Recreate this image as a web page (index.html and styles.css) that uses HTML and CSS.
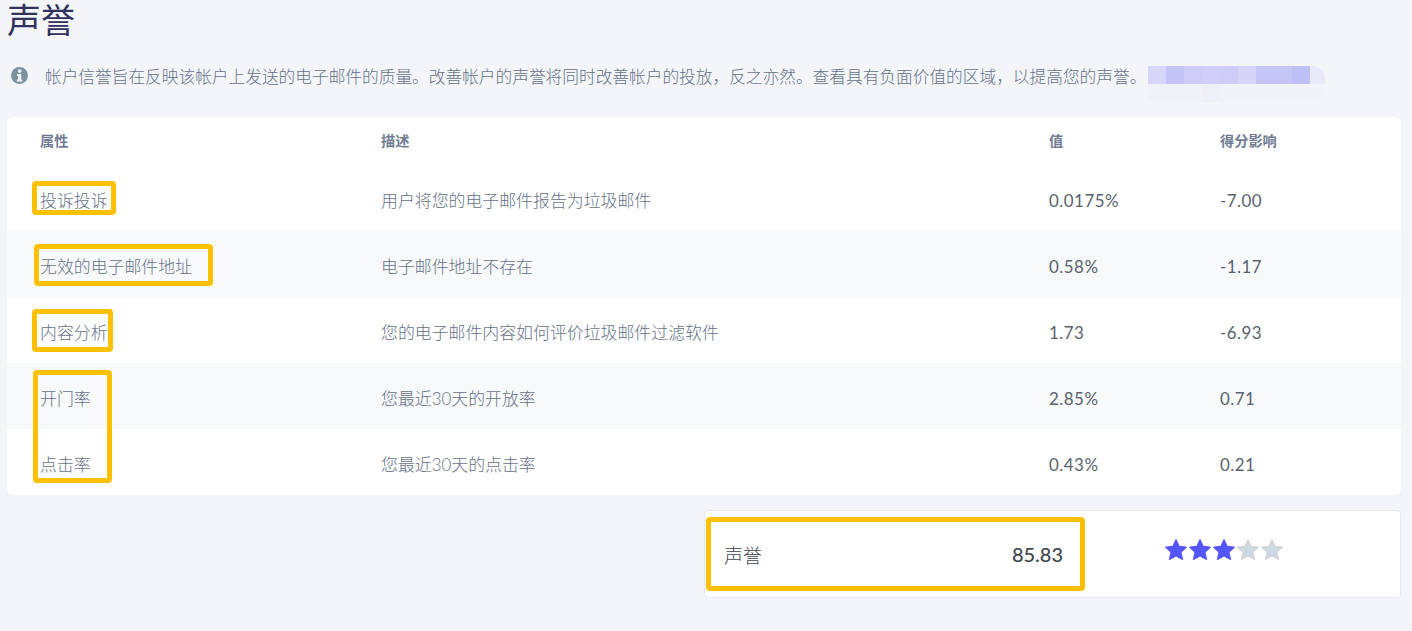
FILE: index.html
```html
<!DOCTYPE html>
<html lang="zh-CN">
<head>
<meta charset="utf-8">
<title>声誉</title>
<link rel="stylesheet" href="styles.css">
</head>
<body>
<main class="page">
  <h1 class="title">声誉</h1>
  <p class="notice">
    <svg class="notice-icon" viewBox="0 0 16 16" aria-hidden="true"><circle cx="8" cy="8" r="8" fill="#7d929f"/><circle cx="8.2" cy="3.9" r="1.7" fill="#f3f5f9"/><path d="M5.6 6.6h4v5.2h1.1v1.9H5.5v-1.9h1.2V8.5H5.6z" fill="#f3f5f9"/></svg>
    <span>帐户信誉旨在反映该帐户上发送的电子邮件的质量。改善帐户的声誉将同时改善帐户的投放，反之亦然。查看具有负面价值的区域，以提高您的声誉。</span>
  </p>
  <table class="table">
    <colgroup><col class="c1"><col class="c2"><col class="c3"><col class="c4"></colgroup>
    <thead>
      <tr><th>属性</th><th>描述</th><th>值</th><th>得分影响</th></tr>
    </thead>
    <tbody>
      <tr><td>投诉投诉</td><td>用户将您的电子邮件报告为垃圾邮件</td><td class="num">0.0175%</td><td class="num">-7.00</td></tr>
      <tr><td>无效的电子邮件地址</td><td>电子邮件地址不存在</td><td class="num">0.58%</td><td class="num">-1.17</td></tr>
      <tr><td>内容分析</td><td>您的电子邮件内容如何评价垃圾邮件过滤软件</td><td class="num">1.73</td><td class="num">-6.93</td></tr>
      <tr><td>开门率</td><td>您最近30天的开放率</td><td class="num">2.85%</td><td class="num">0.71</td></tr>
      <tr><td>点击率</td><td>您最近30天的点击率</td><td class="num">0.43%</td><td class="num">0.21</td></tr>
    </tbody>
  </table>
  <section class="summary">
    <div class="score">
      <span class="score-label">声誉</span>
      <span class="score-value">85.83</span>
    </div>
    <div class="stars">
      <svg class="star on" viewBox="0 0 24 24" aria-hidden="true"><path d="M12 1.4l3.2 6.9 7.4.9-5.5 5.1 1.5 7.4-6.6-3.7-6.6 3.7 1.5-7.4-5.5-5.1 7.4-.9z"/></svg>
      <svg class="star on" viewBox="0 0 24 24" aria-hidden="true"><path d="M12 1.4l3.2 6.9 7.4.9-5.5 5.1 1.5 7.4-6.6-3.7-6.6 3.7 1.5-7.4-5.5-5.1 7.4-.9z"/></svg>
      <svg class="star on" viewBox="0 0 24 24" aria-hidden="true"><path d="M12 1.4l3.2 6.9 7.4.9-5.5 5.1 1.5 7.4-6.6-3.7-6.6 3.7 1.5-7.4-5.5-5.1 7.4-.9z"/></svg>
      <svg class="star" viewBox="0 0 24 24" aria-hidden="true"><path d="M12 1.4l3.2 6.9 7.4.9-5.5 5.1 1.5 7.4-6.6-3.7-6.6 3.7 1.5-7.4-5.5-5.1 7.4-.9z"/></svg>
      <svg class="star" viewBox="0 0 24 24" aria-hidden="true"><path d="M12 1.4l3.2 6.9 7.4.9-5.5 5.1 1.5 7.4-6.6-3.7-6.6 3.7 1.5-7.4-5.5-5.1 7.4-.9z"/></svg>
    </div>
  </section>
</main>
<div class="mosaic"></div>
<div class="mark m1"></div>
<div class="mark m2"></div>
<div class="mark m3"></div>
<div class="mark m4"></div>
<div class="mark m5"></div>
</body>
</html>
```
FILE: styles.css
```css
* { box-sizing: border-box; }
html, body { margin: 0; height: 100%; }
body {
  background: #f3f5f9;
  font-family: Lato, "Noto Sans CJK SC", sans-serif;
  color: #667289;
  overflow: hidden;
  position: relative;
}
.page { padding: 0 11px 0 7px; display: flex; flex-direction: column; }
.title {
  margin: 0;
  height: 59px;
  font-size: 34px;
  line-height: 40px;
  font-weight: 400;
  color: #32325d;
}
.notice {
  margin: 0;
  height: 41px;
  padding: 0 0 8px 4px;
  display: flex;
  align-items: center;
  gap: 17px;
  font-size: 16.7px;
  font-weight: 300;
  white-space: nowrap;
}
.notice-icon { width: 17px; height: 17px; flex: none; }
.table {
  width: 1394px;
  height: 378px;
  margin-top: 17px;
  border-collapse: separate;
  border-spacing: 0;
  table-layout: fixed;
  background: #fff;
  border-radius: 6px;
  overflow: hidden;
}
.c1 { width: 374px; }
.c2 { width: 668px; }
.c3 { width: 171px; }
.c4 { width: 181px; }
th {
  height: 48px;
  padding: 0 0 2px 33px;
  text-align: left;
  font-size: 14.2px;
  font-weight: 700;
  color: #707c93;
}
th + th, td + td { padding-left: 0; }
td {
  height: 66px;
  padding: 2px 0 0 33px;
  font-size: 16.9px;
  font-weight: 300;
}
tbody tr:nth-child(even) td { background: #f8f9fb; }
td.num { padding-top: 4px; font-weight: 400; color: #59626e; letter-spacing: .5px; }
.summary {
  display: flex;
  width: 697px;
  height: 88px;
  margin: 15px 0 0 697px;
  background: #fff;
  border: 1px solid #e6e9f1;
  border-radius: 4px;
}
.score {
  width: 379px;
  padding: 0 21px 0 19px;
  display: flex;
  justify-content: space-between;
  align-items: center;
  font-size: 19px;
  font-weight: 300;
  color: #3f4650;
}
.score-value { font-size: 20px; font-weight: 500; }
.stars { display: flex; margin: 27px 0 0 80px; height: 24px; }
.star { width: 24px; height: 24px; fill: #cfd7df; stroke: #cfd7df; stroke-width: 1; stroke-linejoin: round; }
.star.on { fill: #5555ff; stroke: #5555ff; }
.mosaic {
  position: absolute;
  left: 1148px;
  top: 66px;
  width: 177px;
  height: 36px;
  border-radius: 0 12px 12px 0;
  background:
    linear-gradient(90deg, #d5d6f9 0 18px, #c3c3f8 18px 36px, #cdcdf8 36px 54px, #cfcff9 54px 72px, #cdcdf8 72px 90px, #d4d5f8 90px 108px, #c5c5f8 108px 144px, #c0c0f8 144px 162px, #e8e9f9 162px) top / 100% 18px no-repeat,
    linear-gradient(90deg, #f1f2f8 0 54px, #eef0f8 54px 72px, #f1f3f9 72px) bottom / 100% 18px no-repeat;
}
.mark {
  position: absolute;
  border: 5px solid #ffc000;
  border-radius: 4px;
}
.m1 { left: 32px; top: 181px; width: 84px; height: 34px; }
.m2 { left: 34px; top: 244px; width: 179px; height: 42px; }
.m3 { left: 32px; top: 309px; width: 81px; height: 43px; }
.m4 { left: 33px; top: 370px; width: 79px; height: 113px; }
.m5 { left: 706px; top: 517px; width: 379px; height: 74px; }
```
